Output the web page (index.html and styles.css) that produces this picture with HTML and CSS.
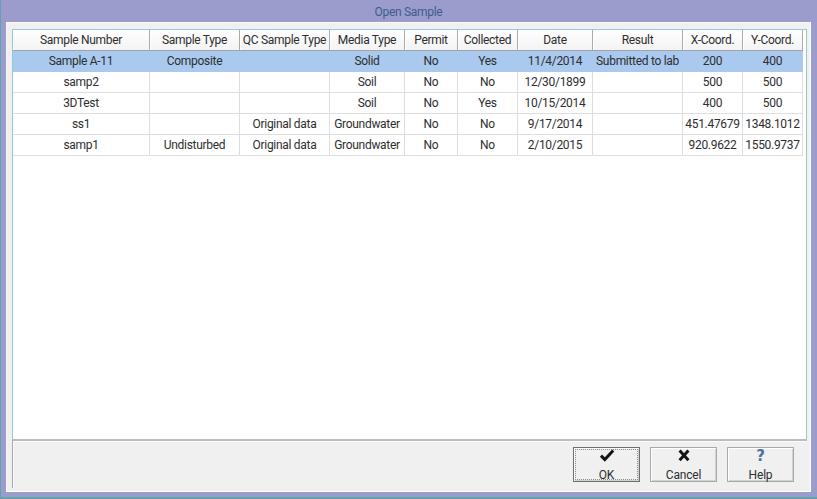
FILE: index.html
```html
<!DOCTYPE html>
<html>
<head>
<meta charset="utf-8">
<title>Open Sample</title>
<link rel="stylesheet" href="styles.css">
</head>
<body>
<div class="window">
  <div class="titlebar">Open Sample</div>
  <div class="client">
    <div class="grid">
      <div class="row head">
        <div class="c">Sample Number</div><div class="c">Sample Type</div><div class="c">QC Sample Type</div><div class="c">Media Type</div><div class="c">Permit</div><div class="c">Collected</div><div class="c">Date</div><div class="c">Result</div><div class="c">X-Coord.</div><div class="c">Y-Coord.</div>
      </div>
      <div class="row sel">
        <div class="c">Sample A-11</div><div class="c">Composite</div><div class="c"></div><div class="c">Solid</div><div class="c">No</div><div class="c">Yes</div><div class="c">11/4/2014</div><div class="c">Submitted to lab</div><div class="c">200</div><div class="c">400</div>
      </div>
      <div class="row">
        <div class="c">samp2</div><div class="c"></div><div class="c"></div><div class="c">Soil</div><div class="c">No</div><div class="c">No</div><div class="c">12/30/1899</div><div class="c"></div><div class="c">500</div><div class="c">500</div>
      </div>
      <div class="row">
        <div class="c">3DTest</div><div class="c"></div><div class="c"></div><div class="c">Soil</div><div class="c">No</div><div class="c">Yes</div><div class="c">10/15/2014</div><div class="c"></div><div class="c">400</div><div class="c">500</div>
      </div>
      <div class="row">
        <div class="c">ss1</div><div class="c"></div><div class="c">Original data</div><div class="c">Groundwater</div><div class="c">No</div><div class="c">No</div><div class="c">9/17/2014</div><div class="c"></div><div class="c">451.47679</div><div class="c">1348.1012</div>
      </div>
      <div class="row">
        <div class="c">samp1</div><div class="c">Undisturbed</div><div class="c">Original data</div><div class="c">Groundwater</div><div class="c">No</div><div class="c">No</div><div class="c">2/10/2015</div><div class="c"></div><div class="c">920.9622</div><div class="c">1550.9737</div>
      </div>
    </div>
    <div class="footer">
      <button class="btn default">
        <span class="inner">
          <svg class="ico" width="16" height="13" viewBox="0 0 16 13"><path d="M2 6.6 L5.8 10.6 L14.2 1.4" fill="none" stroke="#151515" stroke-width="3"/></svg>
          <span class="lbl">OK</span>
        </span>
      </button>
      <button class="btn">
        <span class="inner">
          <svg class="ico" width="14" height="13" viewBox="0 0 14 13"><path d="M2.6 1.6 L11.4 11.2 M11.4 1.6 L2.6 11.2" fill="none" stroke="#151515" stroke-width="3"/></svg>
          <span class="lbl">Cancel</span>
        </span>
      </button>
      <button class="btn">
        <span class="inner">
          <span class="qmark">?</span>
          <span class="lbl">Help</span>
        </span>
      </button>
    </div>
  </div>
</div>
</body>
</html>
```

FILE: styles.css
```css
html, body {
  margin: 0;
  padding: 0;
}
body {
  width: 817px;
  height: 499px;
  overflow: hidden;
  font-family: Roboto, "Open Sans", sans-serif;
  font-size: 12px;
  letter-spacing: -0.3px;
  color: #2e2e2e;
}
.window {
  box-sizing: border-box;
  width: 817px;
  height: 499px;
  background: #9c9ccc;
  border-left: 1px solid #62a3b2;
  border-bottom: 2px solid #62a3b2;
  padding: 0 6px 5px 5px;
  display: flex;
  flex-direction: column;
}
.titlebar {
  height: 22px;
  flex: none;
  display: flex;
  align-items: center;
  justify-content: center;
  padding-top: 2px;
  box-sizing: border-box;
  color: #3b5c8e;
  font-size: 12px;
}
.client {
  flex: 1;
  background: #f0f0f0;
  border-top: 1px solid #fafafa;
  border-left: 1px solid #fafafa;
  border-right: 1px solid #ffffff;
  border-bottom: 1px solid #ffffff;
  padding: 6px 3px 3px 5px;
  display: flex;
  flex-direction: column;
  min-height: 0;
}
.grid {
  flex: 1;
  background: #fff;
  border: 1px solid #93c9cf;
  border-bottom: none;
  overflow: hidden;
}
.row {
  display: grid;
  grid-template-columns: 137px 90px 90px 75px 53px 60px 75px 90px 60px 60px;
  height: 21px;
}
.c {
  box-sizing: border-box;
  height: 21px;
  border-right: 1px solid #dedede;
  border-bottom: 1px solid #dedede;
  display: flex;
  align-items: center;
  justify-content: center;
  white-space: nowrap;
  overflow: visible;
  padding-bottom: 1px;
}
.head .c {
  background: linear-gradient(#ffffff, #f3f3f3);
  border-right: 1px solid #ababab;
  border-bottom: 1px solid #a3a3a3;
  box-shadow: inset 1px 0 #ffffff;
}
.sel .c {
  background: #a9c9ee;
  border-right-color: #a9c9ee;
  border-bottom-color: #a9c9ee;
}
.footer {
  flex: none;
  height: 49px;
  box-sizing: border-box;
  border-top: 2px solid #bcbcbc;
  border-left: 1px solid #a8a8a8;
  box-shadow: inset 1px 1px #fbfbfb;
  display: flex;
  justify-content: flex-end;
  align-items: flex-start;
  gap: 10px;
  padding: 6px 13px 0 0;
}
.btn {
  width: 67px;
  height: 35px;
  box-sizing: border-box;
  margin: 0;
  padding: 1px;
  background: #f0f0f0;
  border: 1px solid #a9a9a9;
  box-shadow: inset 1px 1px #ffffff, inset -1px -1px #d2d2d2;
  font-family: inherit;
  font-size: 12px;
  letter-spacing: -0.2px;
  color: #2e2e2e;
  display: flex;
}
.btn.default {
  border-color: #6e6e6e;
}
.inner {
  flex: 1;
  display: flex;
  flex-direction: column;
  align-items: center;
  justify-content: flex-start;
  padding: 0;
  border: 1px dotted transparent;
  min-height: 0;
}
.btn.default .inner {
  border-color: #8a8a8a;
}
.ico {
  display: block;
  flex: none;
  height: 13px;
  margin-top: -1px;
}
.qmark {
  display: block;
  flex: none;
  height: 13px;
  margin-top: -1px;
  line-height: 14px;
  font-family: "DejaVu Sans", sans-serif;
  font-weight: bold;
  font-size: 15px;
  color: #4f6f9f;
}
.lbl {
  display: block;
  flex: none;
  margin-top: 6px;
  line-height: 14px;
}
```
